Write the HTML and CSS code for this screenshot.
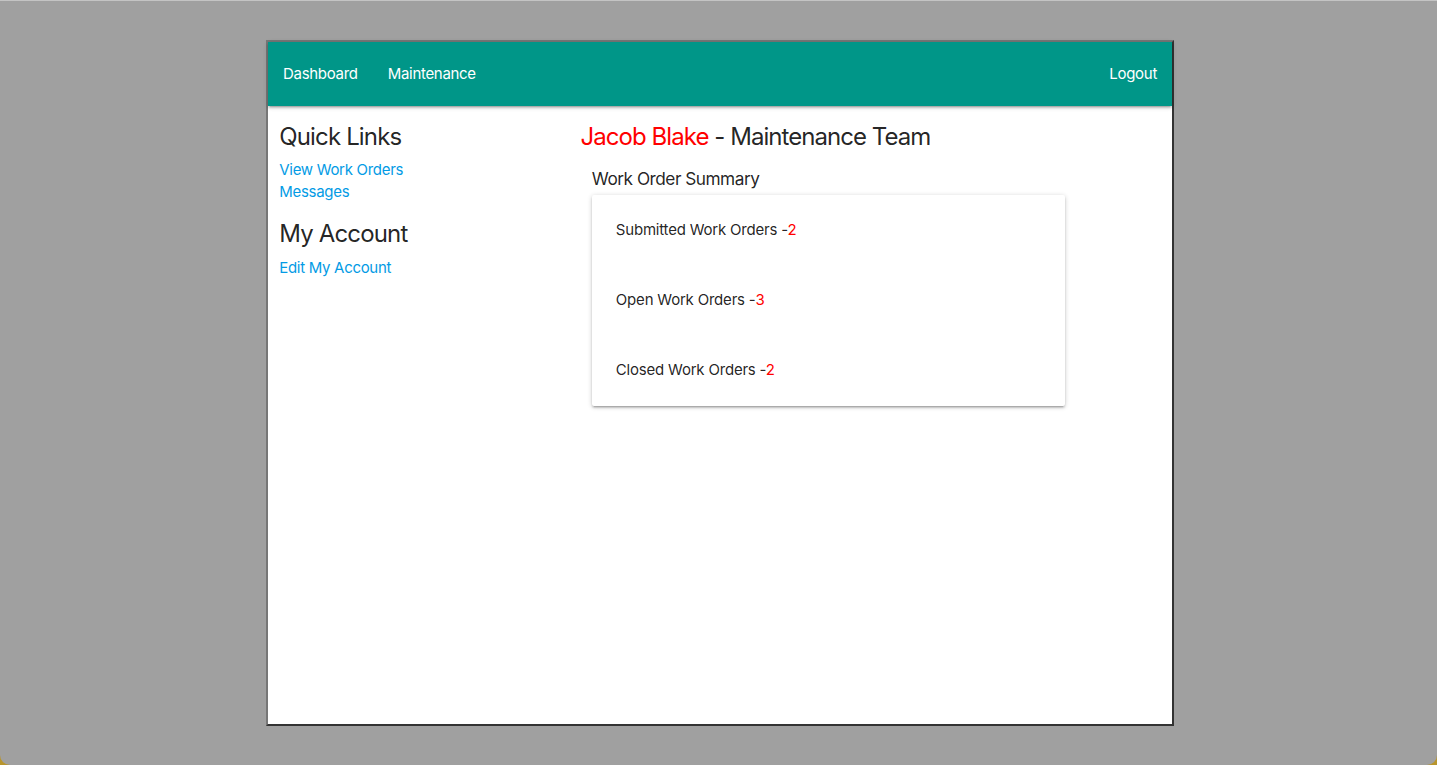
FILE: index.html
```html
<!DOCTYPE html>
<html>
<head>
<meta charset="utf-8">
<title>Maintenance Dashboard</title>
<link rel="stylesheet" href="styles.css">
</head>
<body>
<div class="screen">
  <div class="panel">
    <nav class="nav">
      <ul class="nav-left">
        <li><a href="#">Dashboard</a></li>
        <li><a href="#">Maintenance</a></li>
      </ul>
      <ul class="nav-right">
        <li><a href="#">Logout</a></li>
      </ul>
    </nav>
    <div class="row">
      <aside class="col side">
        <h5 class="h5">Quick Links</h5>
        <a class="link" href="#">View Work Orders</a>
        <a class="link" href="#">Messages</a>
        <h5 class="h5">My Account</h5>
        <a class="link" href="#">Edit My Account</a>
      </aside>
      <main class="col main">
        <h5 class="h5"><span class="red">Jacob Blake</span> - Maintenance Team</h5>
        <div class="sub">
          <h6 class="h6">Work Order Summary</h6>
          <div class="card">
            <p class="item">Submitted Work Orders -<span class="red">2</span></p>
            <p class="item">Open Work Orders -<span class="red">3</span></p>
            <p class="item">Closed Work Orders -<span class="red">2</span></p>
          </div>
        </div>
      </main>
    </div>
  </div>
</div>
</body>
</html>
```
FILE: styles.css
```css
html, body {
  margin: 0;
  padding: 0;
  height: 100%;
}
body {
  background: #b8952c;
  font-family: Inter, Roboto, "Noto Sans", Arial, sans-serif;
  font-size: 15px;
  line-height: 1.5;
  color: rgba(0, 0, 0, 0.87);
  overflow: hidden;
}
.screen {
  height: 765px;
  box-sizing: border-box;
  background: #a0a0a0;
  border-top: 1px solid #c4c4c4;
  border-radius: 0 0 10px 10px;
  padding-top: 39px;
}
.panel {
  margin-left: 266px;
  width: 904px;
  height: 682px;
  background: #fff;
  border-style: solid;
  border-width: 2px;
  border-color: #777 #333 #333 #777;
}
.nav {
  height: 64px;
  background: #009688;
  display: flex;
  justify-content: space-between;
  box-shadow: 0 2px 2px 0 rgba(0,0,0,0.14), 0 3px 1px -2px rgba(0,0,0,0.12), 0 1px 5px 0 rgba(0,0,0,0.2);
  position: relative;
}
.nav ul {
  list-style: none;
  margin: 0;
  padding: 0;
  display: flex;
}
.nav a {
  display: block;
  padding: 0 15px;
  line-height: 64px;
  color: #fff;
  text-decoration: none;
  font-size: 15px;
  letter-spacing: -0.3px;
}
.row {
  display: flex;
}
.col {
  box-sizing: border-box;
  padding: 0 11.25px;
}
.side {
  width: 301.33px;
  display: flex;
  flex-direction: column;
  align-items: flex-start;
}
.main {
  width: 602.67px;
}
.h5 {
  font-size: 24px;
  font-weight: 400;
  line-height: 27px;
  margin: 17px 0 9.3px;
  letter-spacing: -0.85px;
}
.main .h5 {
  letter-spacing: -0.95px;
}
.link {
  display: block;
  color: #039be5;
  text-decoration: none;
  line-height: 22px;
  letter-spacing: -0.3px;
}
.red {
  color: #ff0000;
}
.sub {
  padding: 0 11.25px;
}
.h6 {
  font-size: 17.25px;
  font-weight: 400;
  line-height: 110%;
  margin: 20px 0 6.5px;
  letter-spacing: -0.5px;
}
.card {
  width: 473px;
  box-sizing: border-box;
  padding: 24px;
  background: #fff;
  border-radius: 2px;
  box-shadow: 0 2px 2px 0 rgba(0,0,0,0.14), 0 3px 1px -2px rgba(0,0,0,0.12), 0 1px 5px 0 rgba(0,0,0,0.2);
  display: flex;
  flex-direction: column;
  gap: 47.5px;
}
.item {
  margin: 0;
  line-height: 22.5px;
  font-size: 15px;
  letter-spacing: -0.2px;
}
```
